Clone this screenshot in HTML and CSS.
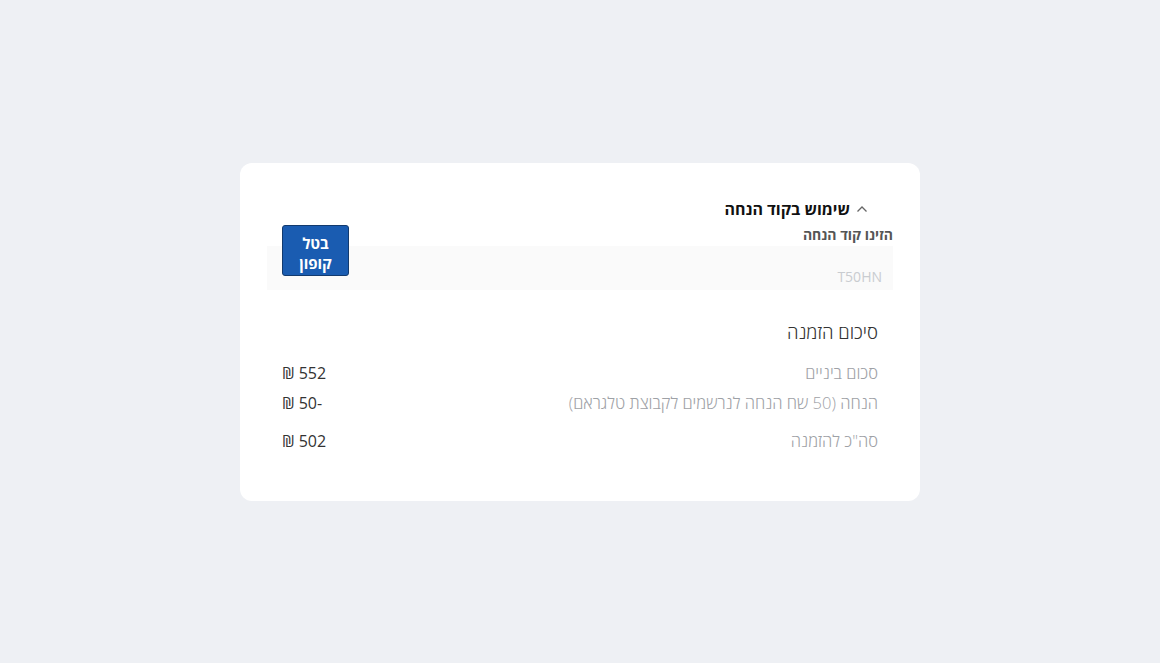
FILE: index.html
```html
<!DOCTYPE html>
<html lang="he" dir="rtl">
<head>
  <meta charset="UTF-8" />
  <meta name="viewport" content="width=device-width, initial-scale=1.0"/>
  <title>סיכום הזמנה</title>
  <link rel="stylesheet" href="styles.css">
</head>
<body>

  <div class="checkout-box">

    <div class="coupon">
      <div class="coupon-toggle">
        <svg class="chevron" width="12" height="8" viewBox="0 0 12 8">
          <path d="M1.5 6.5 L6 2 L10.5 6.5" fill="none" stroke="#666" stroke-width="1.3"/>
        </svg>
        <span>שימוש בקוד הנחה</span>
      </div>

      <div class="coupon-body">
        <label class="coupon-label" for="couponCode">הזינו קוד הנחה</label>
        <input class="coupon-input" id="couponCode" type="text" placeholder="T50HN">
        <button class="coupon-cancel">בטל<br>קופון</button>
      </div>
    </div>

    <div class="summary">
      <h3 class="summary-title">סיכום הזמנה</h3>
      <div class="summary-row">
        <span class="row-label">סכום ביניים</span>
        <span class="row-value">552 ₪</span>
      </div>
      <div class="summary-row">
        <span class="row-label">הנחה (50 שח הנחה לנרשמים לקבוצת טלגראם)</span>
        <span class="row-value">-50 ₪</span>
      </div>
      <div class="summary-row total">
        <span class="row-label">סה"כ להזמנה</span>
        <span class="row-value">502 ₪</span>
      </div>
    </div>

  </div>

</body>
</html>
```

FILE: styles.css
```css
body {
  margin: 0;
  min-height: 100vh;
  display: flex;
  align-items: center;
  justify-content: center;
  font-family: 'Open Sans', 'DejaVu Sans', sans-serif;
  background: #eef0f4;
}
.checkout-box {
  width: 680px;
  box-sizing: border-box;
  background: white;
  border-radius: 12px;
  padding: 35px 27px 45px;
}
.coupon-toggle {
  display: flex;
  align-items: center;
  gap: 6px;
  padding-right: 25px;
  font-size: 16px;
  font-weight: bold;
  color: #111;
  cursor: pointer;
}
.chevron {
  margin-top: 1px;
}
.coupon-body {
  position: relative;
  margin-top: 5px;
}
.coupon-label {
  display: block;
  font-size: 14px;
  font-weight: bold;
  color: #555;
  line-height: 20px;
}
.coupon-input {
  display: block;
  width: 100%;
  box-sizing: border-box;
  height: 44px;
  margin-top: 1px;
  padding: 18px 11px 0;
  border: none;
  background: #fafafa;
  font-family: inherit;
  font-size: 14px;
  color: #333;
  outline: none;
}
.coupon-input::placeholder {
  color: #c9ccd0;
}
.coupon-cancel {
  position: absolute;
  left: 15px;
  top: 0;
  width: 67px;
  height: 51px;
  padding: 6px 0 0;
  background: #1a5cb1;
  border: 1px solid #123a6e;
  border-radius: 3px;
  color: white;
  font-family: inherit;
  font-size: 15px;
  font-weight: bold;
  line-height: 20px;
  cursor: pointer;
}
.summary {
  padding: 0 15px;
  margin-top: 28px;
}
.summary-title {
  margin: 0 0 12px;
  font-size: 18.5px;
  font-weight: 300;
  color: #333;
  line-height: 28px;
}
.summary-row {
  display: flex;
  justify-content: space-between;
  font-size: 16px;
  line-height: 30px;
}
.summary-row.total {
  margin-top: 8px;
}
.row-label {
  color: #9ea1a6;
  font-size: 16.5px;
  font-weight: 300;
}
.row-value {
  color: #333;
}
```
